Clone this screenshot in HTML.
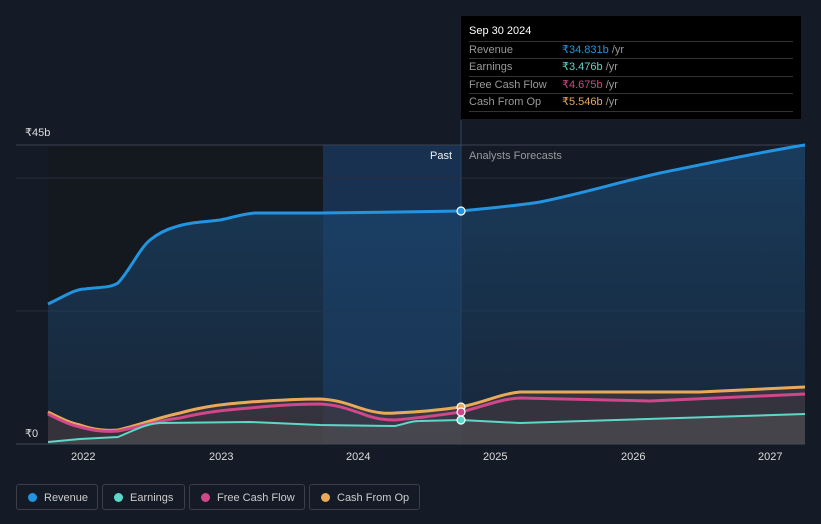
<!DOCTYPE html>
<html><head><style>
body{margin:0;width:821px;height:524px;background:#151b26;font-family:"Liberation Sans",sans-serif;overflow:hidden;position:relative}
.tt{position:absolute;left:461px;top:16px;width:340px;height:103px;background:#000;color:#fff;font-size:11px}
.tt .h{position:absolute;left:8px;top:9px;font-size:11px}
.row{position:absolute;left:8px;width:324px;height:17px;border-top:1px solid #333;line-height:17px;color:#999}
.row span{position:absolute;left:93px}
.leg{position:absolute;top:484px;height:26px;border:1px solid #3a3f4a;border-radius:3px;color:#ccc;font-size:11px;line-height:26px;box-sizing:border-box}
.leg i{position:absolute;left:11px;top:8px;width:9px;height:9px;border-radius:50%}
.leg b{font-weight:normal;position:absolute;left:27px}
.ax{position:absolute;top:451px;color:#ddd;font-size:11px}
</style></head><body>
<svg width="821" height="524" style="position:absolute;left:0;top:0">
<defs>
<linearGradient id="rg" x1="0" y1="0" x2="0" y2="1"><stop offset="0" stop-color="#1b4a75" stop-opacity=".7"/><stop offset="1" stop-color="#1b3a5a" stop-opacity=".4"/></linearGradient>
</defs>
<rect x="48" y="145" width="275" height="299" fill="#141920"/>
<rect x="323" y="145" width="138" height="299" fill="#183150"/>
<line x1="16" y1="145" x2="805" y2="145" stroke="#3a4150"/>
<line x1="16" y1="178" x2="805" y2="178" stroke="#262c38"/>
<line x1="16" y1="311" x2="805" y2="311" stroke="#262c38"/>
<line x1="461" y1="120" x2="461" y2="444" stroke="#2a4460"/>
<path d="M48,304 C65,296 75,289 85,289 C100,287 110,288 118,283 C130,270 140,248 150,240 C160,232 168,229 175,227 C190,222 205,222 220,220 C235,217 242,214 255,213 L320,213 L400,212 L461,211 C490,208 515,206 540,202 C580,194 620,182 660,173 C710,163 760,152 805,145 L805,444 L48,444Z" fill="url(#rg)"/>
<path d="M48,412 C60,418 70,423 80,425 C95,430 105,431 118,430 C140,425 160,417 180,413 C205,406 225,404 250,402 C280,400 300,399 320,399 C340,400 350,405 360,408 C375,413 385,414 395,413 C420,412 440,410 461,407 C485,402 500,394 520,392 L700,392 L805,387 L805,444 L48,444Z" fill="#4a3a40" opacity=".6"/>
<path d="M48,442 L80,439 L118,437 C135,430 145,424 160,423 L250,422 L320,425 L395,426 C405,424 410,421 420,421 L461,420 L520,423 L805,414 L805,444 L48,444Z" fill="#555" opacity=".5"/>
<path d="M48,304 C65,296 75,289 85,289 C100,287 110,288 118,283 C130,270 140,248 150,240 C160,232 168,229 175,227 C190,222 205,222 220,220 C235,217 242,214 255,213 L320,213 L400,212 L461,211 C490,208 515,206 540,202 C580,194 620,182 660,173 C710,163 760,152 805,145" fill="none" stroke="#2394e0" stroke-width="3"/>
<path d="M48,412 C60,418 70,423 80,425 C95,430 105,431 118,430 C140,425 160,417 180,413 C205,406 225,404 250,402 C280,400 300,399 320,399 C340,400 350,405 360,408 C375,413 385,414 395,413 C420,412 440,410 461,407 C485,402 500,394 520,392 L700,392 L805,387" fill="none" stroke="#e8a959" stroke-width="3"/>
<path d="M48,414 C60,420 70,425 80,427 C95,431 105,432 118,431 C140,427 160,420 180,418 C205,412 225,410 250,408 C280,405 300,404 320,404 C340,405 350,410 360,413 C375,419 385,420 395,420 C420,418 440,415 461,412 C485,406 500,399 520,398 L650,401 L805,394" fill="none" stroke="#d0478a" stroke-width="3"/>
<path d="M48,442 L80,439 L118,437 C135,430 145,424 160,423 L250,422 L320,425 L395,426 C405,424 410,421 420,421 L461,420 L520,423 L805,414" fill="none" stroke="#5dd8c8" stroke-width="2"/>
<line x1="16" y1="444" x2="805" y2="444" stroke="#444a55"/>
<circle cx="461" cy="211" r="4" fill="#2394e0" stroke="#fff" stroke-width="1.2"/>
<circle cx="461" cy="407" r="4" fill="#e8a959" stroke="#fff" stroke-width="1.2"/>
<circle cx="461" cy="412" r="4" fill="#d0478a" stroke="#fff" stroke-width="1.2"/>
<circle cx="461" cy="420" r="4" fill="#5dd8c8" stroke="#fff" stroke-width="1.2"/>
</svg>
<div style="position:absolute;left:25px;top:126px;color:#ddd;font-size:11px">₹45b</div>
<div style="position:absolute;left:25px;top:427px;color:#ddd;font-size:11px">₹0</div>
<div style="position:absolute;left:430px;top:150px;color:#eee;font-size:11px">Past</div>
<div style="position:absolute;left:469px;top:150px;color:#999;font-size:11px">Analysts Forecasts</div>
<div class="ax" style="left:71px">2022</div><div class="ax" style="left:209px">2023</div><div class="ax" style="left:346px">2024</div><div class="ax" style="left:483px">2025</div><div class="ax" style="left:621px">2026</div><div class="ax" style="left:758px">2027</div>
<div class="tt"><div class="h">Sep 30 2024</div>
<div class="row" style="top:25px">Revenue<span><em style="font-style:normal;color:#2394e0">₹34.831b</em> /yr</span></div>
<div class="row" style="top:42px">Earnings<span><em style="font-style:normal;color:#5dd8c8">₹3.476b</em> /yr</span></div>
<div class="row" style="top:60px">Free Cash Flow<span><em style="font-style:normal;color:#d0478a">₹4.675b</em> /yr</span></div>
<div class="row" style="top:77px">Cash From Op<span><em style="font-style:normal;color:#e8a959">₹5.546b</em> /yr</span></div>
<div style="position:absolute;left:8px;top:95px;width:324px;border-top:1px solid #333"></div>
</div>
<div class="leg" style="left:16px;width:82px"><i style="background:#2394e0"></i><b>Revenue</b></div>
<div class="leg" style="left:102px;width:83px"><i style="background:#5dd8c8"></i><b>Earnings</b></div>
<div class="leg" style="left:189px;width:116px"><i style="background:#d0478a"></i><b>Free Cash Flow</b></div>
<div class="leg" style="left:309px;width:111px"><i style="background:#e8a959"></i><b>Cash From Op</b></div>
</body></html>
